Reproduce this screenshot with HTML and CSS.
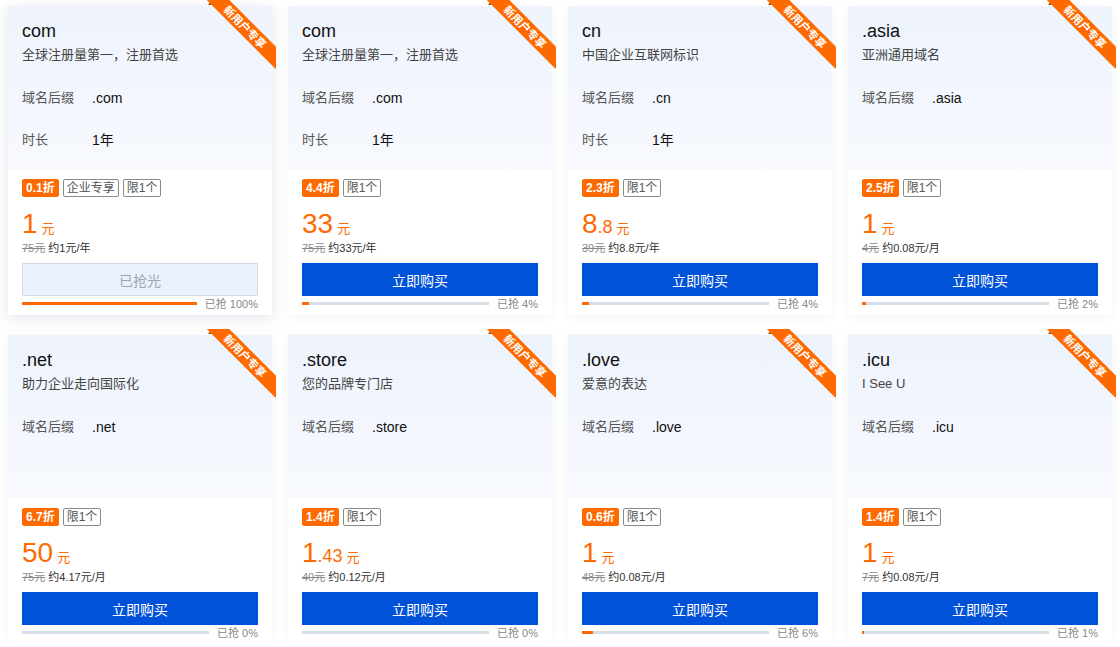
FILE: index.html
```html
<!DOCTYPE html>
<html lang="zh-CN">
<head>
  <meta charset="UTF-8" />
  <title>域名特惠</title>
  <link rel="stylesheet" href="styles.css">
</head>
<body>
  <main class="deal-grid">
    <!-- com 企业 -->
    <div class="deal-card is-hover">
      <div class="ribbon"><span>新用户专享</span></div>
      <div class="deal-top">
        <h3 class="deal-name">com</h3>
        <p class="deal-desc">全球注册量第一，注册首选</p>
        <div class="spec"><span class="spec-label">域名后缀</span><span class="spec-value">.com</span></div>
        <div class="spec"><span class="spec-label">时长</span><span class="spec-value">1年</span></div>
      </div>
      <div class="deal-bottom">
        <div class="tags"><span class="tag tag-off">0.1折</span><span class="tag">企业专享</span><span class="tag">限1个</span></div>
        <div class="price"><span class="price-int">1</span><span class="price-unit">元</span></div>
        <div class="old-price"><s>75元</s> 约1元/年</div>
        <button class="buy-btn sold-out">已抢光</button>
        <div class="progress"><div class="bar"><div class="fill" style="width:100%"></div></div><span class="sold">已抢 100%</span></div>
      </div>
    </div>

    <!-- com -->
    <div class="deal-card">
      <div class="ribbon"><span>新用户专享</span></div>
      <div class="deal-top">
        <h3 class="deal-name">com</h3>
        <p class="deal-desc">全球注册量第一，注册首选</p>
        <div class="spec"><span class="spec-label">域名后缀</span><span class="spec-value">.com</span></div>
        <div class="spec"><span class="spec-label">时长</span><span class="spec-value">1年</span></div>
      </div>
      <div class="deal-bottom">
        <div class="tags"><span class="tag tag-off">4.4折</span><span class="tag">限1个</span></div>
        <div class="price"><span class="price-int">33</span><span class="price-unit">元</span></div>
        <div class="old-price"><s>75元</s> 约33元/年</div>
        <button class="buy-btn">立即购买</button>
        <div class="progress"><div class="bar"><div class="fill" style="width:4%"></div></div><span class="sold">已抢 4%</span></div>
      </div>
    </div>

    <!-- cn -->
    <div class="deal-card">
      <div class="ribbon"><span>新用户专享</span></div>
      <div class="deal-top">
        <h3 class="deal-name">cn</h3>
        <p class="deal-desc">中国企业互联网标识</p>
        <div class="spec"><span class="spec-label">域名后缀</span><span class="spec-value">.cn</span></div>
        <div class="spec"><span class="spec-label">时长</span><span class="spec-value">1年</span></div>
      </div>
      <div class="deal-bottom">
        <div class="tags"><span class="tag tag-off">2.3折</span><span class="tag">限1个</span></div>
        <div class="price"><span class="price-int">8</span><span class="price-dec">.8</span><span class="price-unit">元</span></div>
        <div class="old-price"><s>39元</s> 约8.8元/年</div>
        <button class="buy-btn">立即购买</button>
        <div class="progress"><div class="bar"><div class="fill" style="width:4%"></div></div><span class="sold">已抢 4%</span></div>
      </div>
    </div>

    <!-- asia -->
    <div class="deal-card">
      <div class="ribbon"><span>新用户专享</span></div>
      <div class="deal-top">
        <h3 class="deal-name">.asia</h3>
        <p class="deal-desc">亚洲通用域名</p>
        <div class="spec"><span class="spec-label">域名后缀</span><span class="spec-value">.asia</span></div>
      </div>
      <div class="deal-bottom">
        <div class="tags"><span class="tag tag-off">2.5折</span><span class="tag">限1个</span></div>
        <div class="price"><span class="price-int">1</span><span class="price-unit">元</span></div>
        <div class="old-price"><s>4元</s> 约0.08元/月</div>
        <button class="buy-btn">立即购买</button>
        <div class="progress"><div class="bar"><div class="fill" style="width:2%"></div></div><span class="sold">已抢 2%</span></div>
      </div>
    </div>

    <!-- net -->
    <div class="deal-card">
      <div class="ribbon"><span>新用户专享</span></div>
      <div class="deal-top">
        <h3 class="deal-name">.net</h3>
        <p class="deal-desc">助力企业走向国际化</p>
        <div class="spec"><span class="spec-label">域名后缀</span><span class="spec-value">.net</span></div>
      </div>
      <div class="deal-bottom">
        <div class="tags"><span class="tag tag-off">6.7折</span><span class="tag">限1个</span></div>
        <div class="price"><span class="price-int">50</span><span class="price-unit">元</span></div>
        <div class="old-price"><s>75元</s> 约4.17元/月</div>
        <button class="buy-btn">立即购买</button>
        <div class="progress"><div class="bar"><div class="fill" style="width:0%"></div></div><span class="sold">已抢 0%</span></div>
      </div>
    </div>

    <!-- store -->
    <div class="deal-card">
      <div class="ribbon"><span>新用户专享</span></div>
      <div class="deal-top">
        <h3 class="deal-name">.store</h3>
        <p class="deal-desc">您的品牌专门店</p>
        <div class="spec"><span class="spec-label">域名后缀</span><span class="spec-value">.store</span></div>
      </div>
      <div class="deal-bottom">
        <div class="tags"><span class="tag tag-off">1.4折</span><span class="tag">限1个</span></div>
        <div class="price"><span class="price-int">1</span><span class="price-dec">.43</span><span class="price-unit">元</span></div>
        <div class="old-price"><s>40元</s> 约0.12元/月</div>
        <button class="buy-btn">立即购买</button>
        <div class="progress"><div class="bar"><div class="fill" style="width:0%"></div></div><span class="sold">已抢 0%</span></div>
      </div>
    </div>

    <!-- love -->
    <div class="deal-card">
      <div class="ribbon"><span>新用户专享</span></div>
      <div class="deal-top">
        <h3 class="deal-name">.love</h3>
        <p class="deal-desc">爱意的表达</p>
        <div class="spec"><span class="spec-label">域名后缀</span><span class="spec-value">.love</span></div>
      </div>
      <div class="deal-bottom">
        <div class="tags"><span class="tag tag-off">0.6折</span><span class="tag">限1个</span></div>
        <div class="price"><span class="price-int">1</span><span class="price-unit">元</span></div>
        <div class="old-price"><s>48元</s> 约0.08元/月</div>
        <button class="buy-btn">立即购买</button>
        <div class="progress"><div class="bar"><div class="fill" style="width:6%"></div></div><span class="sold">已抢 6%</span></div>
      </div>
    </div>

    <!-- icu -->
    <div class="deal-card">
      <div class="ribbon"><span>新用户专享</span></div>
      <div class="deal-top">
        <h3 class="deal-name">.icu</h3>
        <p class="deal-desc">I See U</p>
        <div class="spec"><span class="spec-label">域名后缀</span><span class="spec-value">.icu</span></div>
      </div>
      <div class="deal-bottom">
        <div class="tags"><span class="tag tag-off">1.4折</span><span class="tag">限1个</span></div>
        <div class="price"><span class="price-int">1</span><span class="price-unit">元</span></div>
        <div class="old-price"><s>7元</s> 约0.08元/月</div>
        <button class="buy-btn">立即购买</button>
        <div class="progress"><div class="bar"><div class="fill" style="width:1%"></div></div><span class="sold">已抢 1%</span></div>
      </div>
    </div>
  </main>
</body>
</html>
```

FILE: styles.css
```css
/* Reset & Base */
* {
  margin: 0;
  padding: 0;
  box-sizing: border-box;
}

body {
  font-family: 'Liberation Sans', 'Noto Sans CJK SC', sans-serif;
  background: #fff;
  color: #333;
  overflow: hidden;
}

/* Grid */
.deal-grid {
  display: grid;
  grid-template-columns: repeat(4, 264px);
  column-gap: 16px;
  row-gap: 20px;
  padding: 6px 8px 0;
}

/* Card */
.deal-card {
  position: relative;
  height: 309px;
  background: #fff;
  box-shadow: 0 2px 10px rgba(30, 50, 100, 0.05);
}

.deal-card.is-hover {
  box-shadow: 0 3px 14px rgba(30, 50, 100, 0.12);
}

/* Corner ribbon */
.ribbon {
  position: absolute;
  top: -6px;
  right: -4px;
  width: 70px;
  height: 70px;
  overflow: hidden;
  z-index: 2;
}

.ribbon span {
  position: absolute;
  left: -12px;
  top: 19px;
  width: 102px;
  height: 16px;
  line-height: 16px;
  text-align: center;
  background: #ff6a00;
  color: #fff;
  font-size: 11px;
  font-weight: bold;
  transform: rotate(45deg);
}

.deal-card::before,
.deal-card::after {
  content: '';
  position: absolute;
  z-index: 1;
}

.deal-card::before {
  top: -6px;
  right: 60px;
  border-right: 4px solid #a84800;
  border-top: 5px solid transparent;
}

.deal-card::after {
  top: 53px;
  right: -4px;
  border-top: 4px solid #a84800;
  border-right: 4px solid transparent;
}

/* Top area */
.deal-top {
  height: 163px;
  padding: 13px 14px 0;
  background: linear-gradient(180deg, #eef3fc 0%, #f7f9fe 100%);
}

.deal-name {
  font-size: 18px;
  font-weight: normal;
  line-height: 24px;
  color: #111;
}

.deal-desc {
  margin-top: 2px;
  font-size: 13px;
  line-height: 20px;
  color: #444;
}

.deal-desc + .spec {
  margin-top: 12px;
}

.spec {
  display: flex;
  height: 42px;
  line-height: 42px;
}

.spec-label {
  width: 70px;
  font-size: 13px;
  color: #555;
}

.spec-value {
  font-size: 14px;
  color: #111;
}

/* Bottom area */
.deal-bottom {
  padding: 10px 14px 0;
}

.tags {
  display: flex;
  gap: 4px;
  height: 18px;
}

.tag {
  display: inline-block;
  height: 18px;
  line-height: 16px;
  padding: 0 3px;
  font-size: 12px;
  color: #555;
  border: 1px solid #8a8a8a;
  border-radius: 2px;
}

.tag-off {
  background: #ff6a00;
  border-color: #ff6a00;
  color: #fff;
  font-weight: bold;
}

.price {
  margin-top: 11px;
  height: 32px;
  line-height: 32px;
  color: #ff6a00;
}

.price-int {
  font-size: 28px;
}

.price-dec {
  font-size: 18px;
}

.price-unit {
  margin-left: 4px;
  font-size: 13px;
}

.old-price {
  height: 16px;
  line-height: 16px;
  font-size: 11px;
  color: #333;
}

.old-price s {
  color: #888;
}

/* Buy button */
.buy-btn {
  display: block;
  width: 100%;
  height: 33px;
  margin-top: 7px;
  border: none;
  background: #0052d9;
  color: #fff;
  font-family: inherit;
  font-size: 14px;
  cursor: pointer;
}

.buy-btn.sold-out {
  background: #ebf1fc;
  border: 1px solid #d3dbe8;
  color: #9da6b6;
  cursor: default;
}

/* Progress */
.progress {
  display: flex;
  align-items: center;
  height: 14px;
}

.bar {
  flex: 1;
  height: 3px;
  background: #d6dce8;
}

.fill {
  height: 100%;
  background: #ff6a00;
}

.sold {
  margin-left: 8px;
  font-size: 11px;
  color: #888;
  white-space: nowrap;
}
```
